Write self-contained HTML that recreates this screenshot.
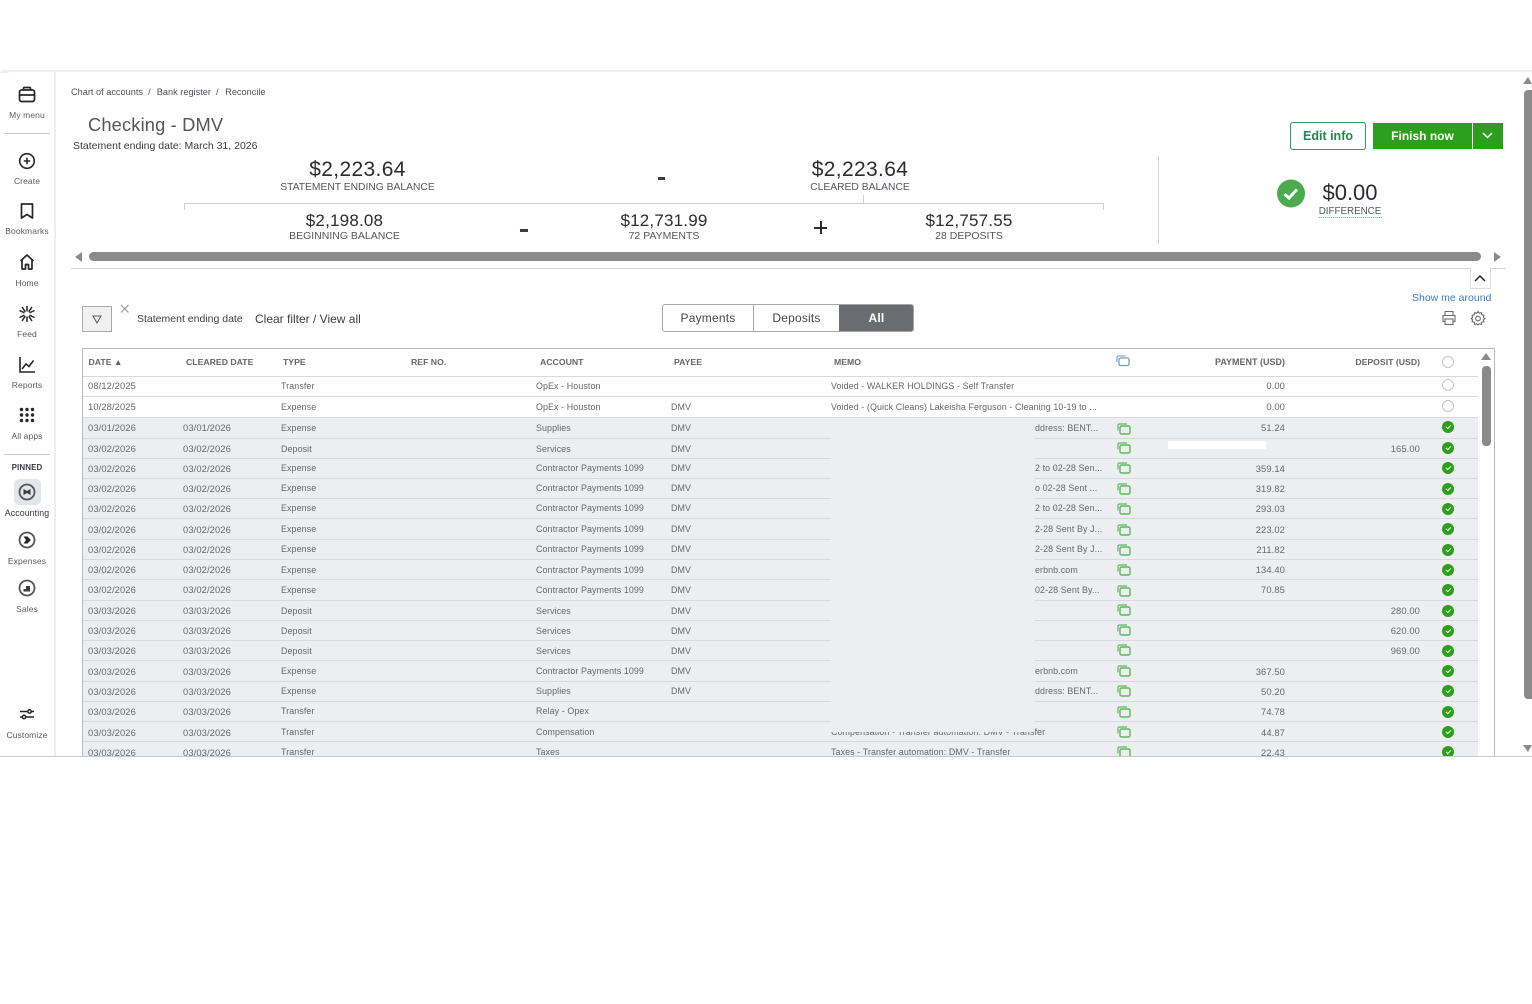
<!DOCTYPE html>
<html><head><meta charset="utf-8"><title>Reconcile</title>
<style>
*{box-sizing:border-box}
html,body{margin:0;padding:0;background:#fff}
body{width:1532px;height:1004px;position:relative;overflow:hidden;font-family:"Liberation Sans",sans-serif;color:#55565b}
.a{position:absolute;white-space:nowrap}
.c{position:absolute;white-space:nowrap;transform:translateX(-50%);text-align:center}
.nav{position:absolute;left:0;width:54px;text-align:center;font-size:8.5px;color:#5b5c62;letter-spacing:.1px}
.ico{position:absolute;left:17px}
.amt{font-size:21px;color:#2b2c30;letter-spacing:.35px}
.amt2{font-size:17px;color:#2b2c30;letter-spacing:.2px}
.lbl{font-size:10.3px;color:#55565b}
.th{position:absolute;top:357px;font-size:8.7px;font-weight:bold;color:#55565b;white-space:nowrap;opacity:.9}
.r{position:absolute;left:83px;width:1395px;height:21px;border-bottom:1px solid #d8d9de;font-size:8.9px;color:#66676d;letter-spacing:.1px}
.g{background:#eceef1}
.r span{position:absolute;top:5px;white-space:nowrap}
.d{left:5px;font-size:9.4px}.e{left:100px;font-size:9.4px}.t{left:198px}.o{left:453px}.p{left:588px}.m{left:748px}.n{left:952px}
.q{right:193px;font-size:9.4px}.s{right:58px;font-size:9.4px}
.r.x span.d,.r.x span.e,.r.x span.q,.r.x span.s{top:4px}
.r svg{position:absolute;left:1033.5px;top:5px}
.k{position:absolute;left:1359px;top:3px;width:12px;height:12px;border-radius:50%;background:#2ca01c}
.k:after{content:"";position:absolute;left:3.8px;top:3.8px;width:3.8px;height:2.2px;border-left:1px solid #fff;border-bottom:1px solid #fff;transform:rotate(-45deg)}
.u{position:absolute;left:1359px;top:3px;width:12px;height:12px;border-radius:50%;border:1px solid #c4c5ca;background:#fff}
</style></head><body>

<svg width="0" height="0" style="position:absolute"><defs><g id="cp"><rect x="3" y="3" width="10" height="8" rx="1.5" fill="none" stroke="#5cb85c" stroke-width="1.4"/><path d="M1 7.500V2.500Q1 1 2.500 1H10" fill="none" stroke="#5cb85c" stroke-width="1.2"/></g></defs></svg>

<!-- frame -->
<div class="a" style="left:0;top:70px;width:1532px;height:3px;background:#eceef0;border-radius:12px 0 0 0"></div>
<div class="a" style="left:0;top:72px;width:1532px;height:684px;background:#fff;border-radius:12px 0 0 0"></div>
<div class="a" style="left:54px;top:72px;width:1.500px;height:684px;background:#eceef0"></div>

<!-- nav -->
<svg class="ico" style="top:85px" width="20" height="20" viewBox="0 0 20 20" fill="none" stroke="#26272b" stroke-width="1.7"><rect x="2.500" y="5" width="15" height="11.500" rx="2"/><path d="M6.500 5V3.500Q6.500 2.500 7.500 2.500H12.500Q13.500 2.500 13.500 3.500V5M2.500 10H17.500"/></svg>
<div class="nav" style="top:110px">My menu</div>
<div class="a" style="left:4px;top:133px;width:46px;height:1px;background:#c9ccd0"></div>
<svg class="ico" style="top:151px" width="20" height="20" viewBox="0 0 20 20" fill="none" stroke="#26272b" stroke-width="1.6"><circle cx="10" cy="10" r="7.300"/><path d="M10 6.800V13.200M6.800 10H13.200"/></svg>
<div class="nav" style="top:176px">Create</div>
<svg class="ico" style="top:201px" width="20" height="20" viewBox="0 0 20 20" fill="none" stroke="#26272b" stroke-width="1.700"><path d="M4.500 3H15.500V17L10 13.500L4.500 17Z" stroke-linejoin="round"/></svg>
<div class="nav" style="top:226px">Bookmarks</div>
<svg class="ico" style="top:252px" width="20" height="20" viewBox="0 0 20 20" fill="none" stroke="#26272b" stroke-width="1.700"><path d="M3.500 9L10 3L16.500 9M5 8V17H8.500V12.500H11.500V17H15V8" stroke-linejoin="round"/></svg>
<div class="nav" style="top:278px">Home</div>
<svg class="ico" style="top:304px" width="20" height="20" viewBox="0 0 20 20" fill="none" stroke="#26272b" stroke-width="1.500"><path d="M10 2V7.500M10 12.500V18M2.500 6.500L7.500 8.800M12.500 11.200L17.500 13.500M2.500 13.500L7.500 11.200M12.500 8.800L17.500 6.500M5 3L8.300 7.800M11.700 12.200L15 17M15 3L11.700 7.800M8.300 12.200L5 17"/></svg>
<div class="nav" style="top:329px">Feed</div>
<svg class="ico" style="top:355px" width="20" height="20" viewBox="0 0 20 20" fill="none" stroke="#26272b" stroke-width="1.600"><path d="M3 2V17H18M5 14L9 9L12 11.500L16.500 5.500"/></svg>
<div class="nav" style="top:380px">Reports</div>
<svg class="ico" style="top:405px" width="20" height="20" viewBox="0 0 20 20" fill="#26272b"><circle cx="4.500" cy="4.500" r="1.700"/><circle cx="10" cy="4.500" r="1.700"/><circle cx="15.500" cy="4.500" r="1.700"/><circle cx="4.500" cy="10" r="1.700"/><circle cx="10" cy="10" r="1.700"/><circle cx="15.500" cy="10" r="1.700"/><circle cx="4.500" cy="15.500" r="1.700"/><circle cx="10" cy="15.500" r="1.700"/><circle cx="15.500" cy="15.500" r="1.700"/></svg>
<div class="nav" style="top:431px">All apps</div>
<div class="a" style="left:4px;top:454px;width:46px;height:1px;background:#c9ccd0"></div>
<div class="nav" style="top:463px;font-weight:bold;color:#3c3d42;font-size:8px">PINNED</div>
<div class="a" style="left:14px;top:479px;width:27px;height:26px;border-radius:5px;background:#e3e5e8"></div>
<svg class="ico" style="top:482px" width="20" height="20" viewBox="0 0 20 20"><circle cx="10" cy="10" r="7.500" fill="none" stroke="#55565b" stroke-width="1.800"/><path d="M6.500 7L10 9L13.500 7V13L10 11L6.500 13Z" fill="#3c3d42"/></svg>
<div class="nav" style="top:508px;color:#36373b;font-size:8.800px">Accounting</div>
<svg class="ico" style="top:530px" width="20" height="20" viewBox="0 0 20 20"><circle cx="10" cy="10" r="7.500" fill="none" stroke="#55565b" stroke-width="1.800"/><path d="M6.500 6.500H10.500L13.800 10L10.500 13.500H6.500L9 10Z" fill="#26272b"/></svg>
<div class="nav" style="top:556px">Expenses</div>
<svg class="ico" style="top:578px" width="20" height="20" viewBox="0 0 20 20"><circle cx="10" cy="10" r="7.500" fill="none" stroke="#55565b" stroke-width="1.800"/><path d="M6.500 13.500V11H9V8H13V13.500Z" fill="#3c3d42"/></svg>
<div class="nav" style="top:604px">Sales</div>
<svg class="ico" style="top:704px" width="20" height="20" viewBox="0 0 20 20" fill="none" stroke="#26272b" stroke-width="1.500"><path d="M3 7.500H17M3 13H17"/><circle cx="12.500" cy="7.500" r="1.700" fill="#fff"/><circle cx="7" cy="13" r="1.700" fill="#fff"/></svg>
<div class="nav" style="top:730px">Customize</div>

<!-- header -->
<div class="a" style="left:71px;top:87px;font-size:9.200px;color:#505156">Chart of accounts &nbsp;/&nbsp; <span style="margin-left:1px">Bank register</span> &nbsp;/&nbsp; <span style="margin-left:1.500px">Reconcile</span></div>
<div class="a" style="left:88px;top:114px;font-size:18.300px;color:#55565b;letter-spacing:.15px">Checking - DMV</div>
<div class="a" style="left:73px;top:140px;font-size:10.500px;color:#3a3b40">Statement ending date: March 31, 2026</div>

<div class="a" style="left:1290px;top:122px;width:76px;height:28px;border:1px solid #2e9e5f;border-radius:3px;color:#1f8a4c;font-size:12.500px;font-weight:bold;text-align:center;line-height:26px">Edit info</div>
<div class="a" style="left:1373px;top:122.500px;width:99px;height:26px;background:#2ca01c;color:#fff;font-size:12px;font-weight:bold;text-align:center;line-height:26px">Finish now</div>
<div class="a" style="left:1473px;top:122.500px;width:29.500px;height:26px;background:#2ca01c"></div>
<svg class="a" style="left:1481px;top:131px" width="13" height="9" viewBox="0 0 13 9" fill="none" stroke="#fff" stroke-width="1.500"><path d="M2 2L6.500 6.500L11 2"/></svg>

<div class="c amt" style="left:357.500px;top:158px">$2,223.64</div>
<div class="c lbl" style="left:357.500px;top:182px">STATEMENT ENDING BALANCE</div>
<div class="a" style="left:658px;top:177px;width:7px;height:2.500px;background:#3a3b40"></div>
<div class="c amt" style="left:860px;top:158px">$2,223.64</div>
<div class="c lbl" style="left:860px;top:182px">CLEARED BALANCE</div>
<div class="a" style="left:184px;top:203px;width:920px;height:7px;border:1px solid #cfd0d3;border-bottom:0"></div>
<div class="a" style="left:863px;top:195px;width:1px;height:8px;background:#cfd0d3"></div>
<div class="c amt2" style="left:344.500px;top:211px">$2,198.08</div>
<div class="c lbl" style="left:344.500px;top:230px;font-size:10.500px">BEGINNING BALANCE</div>
<div class="a" style="left:520px;top:229px;width:7.500px;height:2.500px;background:#3a3b40"></div>
<div class="c amt2" style="left:664px;top:211px">$12,731.99</div>
<div class="c lbl" style="left:664px;top:230px;font-size:10.500px">72 PAYMENTS</div>
<div class="a" style="left:814px;top:226.500px;width:13px;height:2px;background:#2b2c30"></div>
<div class="a" style="left:819.500px;top:221px;width:2px;height:13px;background:#2b2c30"></div>
<div class="c amt2" style="left:969px;top:211px">$12,757.55</div>
<div class="c lbl" style="left:969px;top:230px;font-size:10.500px">28 DEPOSITS</div>
<div class="a" style="left:1158px;top:156px;width:1px;height:88px;background:#d4d5d8"></div>
<svg class="a" style="left:1276px;top:179px" width="30" height="30" viewBox="0 0 30 30"><circle cx="15" cy="14.500" r="14" fill="#4cab4c"/><path d="M8.500 15L13 19L21 10.500" fill="none" stroke="#fff" stroke-width="3"/></svg>
<div class="c" style="left:1350px;top:180px;font-size:22px;color:#2b2c30">$0.00</div>
<div class="c" style="left:1350px;top:205.500px;font-size:9.800px;color:#55565b;border-bottom:1px dotted #4b8fc8;line-height:12px;height:12px">DIFFERENCE</div>

<!-- horizontal scroll -->
<svg class="a" style="left:74px;top:252px" width="10" height="10"><path d="M8 0V10L1 5Z" fill="#8a8a8a"/></svg>
<div class="a" style="left:89px;top:252px;width:1392px;height:9px;border-radius:5px;background:#8a8a8a"></div>
<svg class="a" style="left:1493px;top:252px" width="10" height="10"><path d="M1 0V10L8 5Z" fill="#8a8a8a"/></svg>
<div class="a" style="left:71px;top:268px;width:1435px;height:1px;background:#d2d3d6"></div>
<div class="a" style="left:1470px;top:268px;width:21px;height:21px;border:1px solid #dcdde0;border-top:0;background:#fff"></div>
<svg class="a" style="left:1474px;top:274px" width="12" height="8" fill="none" stroke="#26272b" stroke-width="1.500"><path d="M1 7L6 2L11 7"/></svg>
<div class="a" style="left:1412px;top:292px;font-size:10.500px;color:#3b7fc4">Show me around</div>
<svg class="a" style="left:1441px;top:310px" width="16" height="16" viewBox="0 0 16 16" fill="none" stroke="#6b6c72" stroke-width="1.100"><path d="M4 5V1.500H12V5M4 11.500H2V5.500H14V11.500H12"/><rect x="4" y="9" width="8" height="5.500"/></svg>
<svg class="a" style="left:1470px;top:310px" width="16" height="16" viewBox="0 0 16 16" fill="none" stroke="#6b6c72" stroke-width="1.100"><path d="M8 1.500L9.200 3.200L11.300 2.700L11.800 4.800L13.900 5.300L13.400 7.400L14.800 8.500L13.400 9.800L13.900 11.700L11.800 12.200L11.300 14.300L9.200 13.800L8 15L6.800 13.800L4.700 14.300L4.200 12.200L2.100 11.700L2.600 9.800L1.200 8.500L2.600 7.400L2.100 5.300L4.200 4.800L4.700 2.700L6.800 3.200Z"/><circle cx="8" cy="8.500" r="2.300"/></svg>

<!-- filter -->
<div class="a" style="left:81.500px;top:306px;width:30px;height:26px;border:1px solid #a9aaad;background:#f1f1f2"></div>
<svg class="a" style="left:92px;top:315px" width="10" height="9" fill="none" stroke="#55565b" stroke-width="1"><path d="M1 1H9L5 8Z"/></svg>
<svg class="a" style="left:120px;top:304px" width="10" height="10" stroke="#9a9ba0" stroke-width="1.200"><path d="M1 1L8.500 8.500M8.500 1L1 8.500"/></svg>
<div class="a" style="left:137px;top:312.500px;font-size:10.500px;color:#3f4045">Statement ending date</div>
<div class="a" style="left:255px;top:311.500px;font-size:12px;color:#3f4045">Clear filter / View all</div>

<div class="a" style="left:662px;top:304px;width:252px;height:28px;border:1px solid #a6a7ab;border-radius:3px;overflow:hidden;font-size:12px;color:#45464b;line-height:26px;text-align:center;letter-spacing:.2px">
<div class="a" style="left:0;top:0;width:91px;height:26px;border-right:1px solid #a6a7ab">Payments</div>
<div class="a" style="left:91px;top:0;width:85px;height:26px">Deposits</div>
<div class="a" style="left:176px;top:0;width:75px;height:26px;background:#6b6c72;color:#fff;font-weight:bold">All</div>
</div>

<!-- table -->
<div class="a" style="left:82px;top:348px;width:1413px;height:420px;border:1.500px solid #b9babd;border-bottom:0"></div>
<div class="th" style="left:88.500px">DATE &#9650;</div>
<div class="th" style="left:186px">CLEARED DATE</div>
<div class="th" style="left:283px">TYPE</div>
<div class="th" style="left:411px">REF NO.</div>
<div class="th" style="left:540px">ACCOUNT</div>
<div class="th" style="left:674px">PAYEE</div>
<div class="th" style="left:834px">MEMO</div>
<svg class="a" style="left:1116px;top:355px" width="15" height="13" viewBox="0 0 15 13"><rect x="3" y="3" width="10" height="7.500" rx="1.500" fill="none" stroke="#7a9cc0" stroke-width="1.300"/><path d="M1 7V2.500Q1 1 2.500 1H10" fill="none" stroke="#7a9cc0" stroke-width="1.100"/></svg>
<div class="th" style="right:247px;font-size:9px">PAYMENT (USD)</div>
<div class="th" style="right:112px">DEPOSIT (USD)</div>
<div class="a" style="left:1442px;top:356px;width:12px;height:12px;border-radius:50%;border:1px solid #c4c5ca"></div>
<div class="a" style="left:83px;top:376px;width:1395px;height:1px;background:#d8d9de"></div>

<div class="r x" style="top:376px"><span class="d">08/12/2025</span><span class="t">Transfer</span><span class="o">OpEx - Houston</span><span class="m">Voided - WALKER HOLDINGS - Self Transfer</span><span class="q">0.00</span><i class="u"></i></div>
<div class="r x" style="top:397px"><span class="d">10/28/2025</span><span class="t">Expense</span><span class="o">OpEx - Houston</span><span class="p">DMV</span><span class="m">Voided - (Quick Cleans) Lakeisha Ferguson - Cleaning 10-19 to ...</span><span class="q">0.00</span><i class="u"></i></div>
<div class="r g x" style="top:418px"><span class="d">03/01/2026</span><span class="e">03/01/2026</span><span class="t">Expense</span><span class="o">Supplies</span><span class="p">DMV</span><span class="n">ddress: BENT...</span><svg width="15" height="13"><use href="#cp"/></svg><span class="q">51.24</span><i class="k"></i></div>
<div class="r g x" style="top:439px;height:20px"><span class="d">03/02/2026</span><span class="e">03/02/2026</span><span class="t">Deposit</span><span class="o">Services</span><span class="p">DMV</span><svg style="top:3px" width="15" height="13"><use href="#cp"/></svg><span class="s">165.00</span><i class="k"></i></div>
<div class="r g" style="top:459px;height:20px"><span class="d" style="top:4px">03/02/2026</span><span class="e" style="top:4px">03/02/2026</span><span class="t" style="top:4px">Expense</span><span class="o" style="top:4px">Contractor Payments 1099</span><span class="p" style="top:4px">DMV</span><span class="n" style="top:4px">2 to 02-28 Sen...</span><svg style="top:3px" width="15" height="13"><use href="#cp"/></svg><span class="q" style="top:4px">359.14</span><i class="k" style="top:3px"></i></div>
<div class="r g" style="top:479px;height:20px"><span class="d" style="top:4px">03/02/2026</span><span class="e" style="top:4px">03/02/2026</span><span class="t" style="top:4px">Expense</span><span class="o" style="top:4px">Contractor Payments 1099</span><span class="p" style="top:4px">DMV</span><span class="n" style="top:4px">o 02-28 Sent ...</span><svg style="top:4px" width="15" height="13"><use href="#cp"/></svg><span class="q" style="top:4px">319.82</span><i class="k" style="top:4px"></i></div>
<div class="r g" style="top:499px;height:20px"><span class="d" style="top:4px">03/02/2026</span><span class="e" style="top:4px">03/02/2026</span><span class="t" style="top:4px">Expense</span><span class="o" style="top:4px">Contractor Payments 1099</span><span class="p" style="top:4px">DMV</span><span class="n" style="top:4px">2 to 02-28 Sen...</span><svg style="top:4px" width="15" height="13"><use href="#cp"/></svg><span class="q" style="top:4px">293.03</span><i class="k" style="top:4px"></i></div>
<div class="r g" style="top:519px;height:21px"><span class="d">03/02/2026</span><span class="e">03/02/2026</span><span class="t">Expense</span><span class="o">Contractor Payments 1099</span><span class="p">DMV</span><span class="n">2-28 Sent By J...</span><svg width="15" height="13"><use href="#cp"/></svg><span class="q">223.02</span><i class="k" style="top:4px"></i></div>
<div class="r g" style="top:540px;height:20px"><span class="d" style="top:4px">03/02/2026</span><span class="e" style="top:4px">03/02/2026</span><span class="t" style="top:4px">Expense</span><span class="o" style="top:4px">Contractor Payments 1099</span><span class="p" style="top:4px">DMV</span><span class="n" style="top:4px">2-28 Sent By J...</span><svg style="top:4px" width="15" height="13"><use href="#cp"/></svg><span class="q" style="top:4px">211.82</span><i class="k" style="top:4px"></i></div>
<div class="r g x" style="top:560px;height:20px"><span class="d">03/02/2026</span><span class="e">03/02/2026</span><span class="t">Expense</span><span class="o">Contractor Payments 1099</span><span class="p">DMV</span><span class="n">erbnb.com</span><svg style="top:4px" width="15" height="13"><use href="#cp"/></svg><span class="q">134.40</span><i class="k" style="top:4px"></i></div>
<div class="r g x" style="top:580px;height:21px"><span class="d">03/02/2026</span><span class="e">03/02/2026</span><span class="t">Expense</span><span class="o">Contractor Payments 1099</span><span class="p">DMV</span><span class="n">02-28 Sent By...</span><svg width="15" height="13"><use href="#cp"/></svg><span class="q">70.85</span><i class="k" style="top:4px"></i></div>
<div class="r g x" style="top:601px;height:20px"><span class="d">03/03/2026</span><span class="e">03/03/2026</span><span class="t">Deposit</span><span class="o">Services</span><span class="p">DMV</span><svg style="top:3px" width="15" height="13"><use href="#cp"/></svg><span class="s">280.00</span><i class="k" style="top:4px"></i></div>
<div class="r g x" style="top:621px;height:20px"><span class="d">03/03/2026</span><span class="e">03/03/2026</span><span class="t">Deposit</span><span class="o">Services</span><span class="p">DMV</span><svg style="top:3px" width="15" height="13"><use href="#cp"/></svg><span class="s">620.00</span><i class="k" style="top:4px"></i></div>
<div class="r g x" style="top:641px;height:20px"><span class="d">03/03/2026</span><span class="e">03/03/2026</span><span class="t" style="top:5px">Deposit</span><span class="o" style="top:5px">Services</span><span class="p" style="top:5px">DMV</span><svg style="top:3px" width="15" height="13"><use href="#cp"/></svg><span class="s">969.00</span><i class="k" style="top:4px"></i></div>
<div class="r g" style="top:661px;height:21px"><span class="d">03/03/2026</span><span class="e">03/03/2026</span><span class="t">Expense</span><span class="o">Contractor Payments 1099</span><span class="p">DMV</span><span class="n">erbnb.com</span><svg style="top:4px" width="15" height="13"><use href="#cp"/></svg><span class="q">367.50</span><i class="k" style="top:4px"></i></div>
<div class="r g" style="top:682px;height:20px"><span class="d" style="top:4px">03/03/2026</span><span class="e" style="top:4px">03/03/2026</span><span class="t" style="top:4px">Expense</span><span class="o" style="top:4px">Supplies</span><span class="p" style="top:4px">DMV</span><span class="n" style="top:4px">ddress: BENT...</span><svg style="top:3px" width="15" height="13"><use href="#cp"/></svg><span class="q" style="top:4px">50.20</span><i class="k" style="top:3px"></i></div>
<div class="r g" style="top:702px;height:20px"><span class="d" style="top:4px">03/03/2026</span><span class="e" style="top:4px">03/03/2026</span><span class="t" style="top:4px">Transfer</span><span class="o" style="top:4px">Relay - Opex</span><svg style="top:4px" width="15" height="13"><use href="#cp"/></svg><span class="q" style="top:4px">74.78</span><i class="k" style="top:4px"></i></div>
<div class="r g" style="top:722px;height:20px"><span class="d" style="top:5px">03/03/2026</span><span class="e" style="top:5px">03/03/2026</span><span class="t" style="top:5px">Transfer</span><span class="o" style="top:5px">Compensation</span><span class="m" style="top:5px">Compensation - Transfer automation: DMV - Transfer</span><svg style="top:4px" width="15" height="13"><use href="#cp"/></svg><span class="q" style="top:5px">44.87</span><i class="k" style="top:4px"></i></div>
<div class="r g" style="top:742px;height:21px"><span class="d" style="top:5px">03/03/2026</span><span class="e" style="top:5px">03/03/2026</span><span class="t" style="top:5px">Transfer</span><span class="o" style="top:5px">Taxes</span><span class="m" style="top:5px">Taxes - Transfer automation: DMV - Transfer</span><svg style="top:4px" width="15" height="13"><use href="#cp"/></svg><span class="q" style="top:5px">22.43</span><i class="k" style="top:4px"></i></div>

<!-- redactions -->
<div class="a" style="left:831px;top:419px;width:204px;height:313px;background:#eceef1"></div>
<div class="a" style="left:1168px;top:441px;width:98px;height:8px;background:#fff"></div>

<!-- table scrollbar -->
<svg class="a" style="left:1481px;top:353px" width="10" height="8"><path d="M0 7H10L5 0Z" fill="#8a8a8a"/></svg>
<div class="a" style="left:1482px;top:366px;width:9px;height:80px;border-radius:4px;background:#8a8a8a"></div>

<!-- page scrollbar -->
<svg class="a" style="left:1523px;top:77px" width="9" height="8"><path d="M0 7H9V7L5 0Z" fill="#8a8a8a"/></svg>
<div class="a" style="left:1524px;top:90px;width:8px;height:609px;border-radius:4px 0 0 4px;background:#8a8a8a"></div>
<svg class="a" style="left:1523px;top:745px" width="9" height="8"><path d="M0 0H9L5 7Z" fill="#8a8a8a"/></svg>

<!-- bottom cover -->
<div class="a" style="left:0;top:756px;width:1532px;height:248px;background:#fff;border-top:1.500px solid #c9cad0"></div>
</body></html>
